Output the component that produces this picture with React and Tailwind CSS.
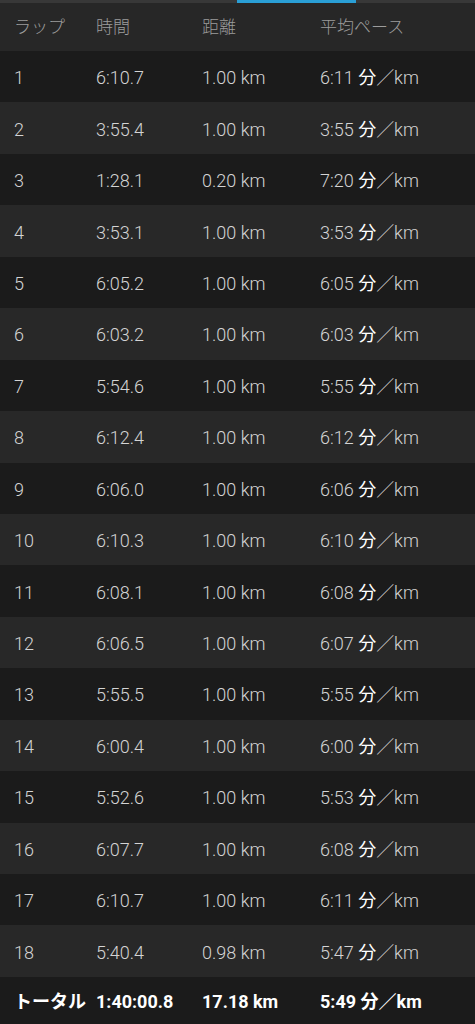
const laps = [
  ['1', '6:10.7', '1.00 km', '6:11'],
  ['2', '3:55.4', '1.00 km', '3:55'],
  ['3', '1:28.1', '0.20 km', '7:20'],
  ['4', '3:53.1', '1.00 km', '3:53'],
  ['5', '6:05.2', '1.00 km', '6:05'],
  ['6', '6:03.2', '1.00 km', '6:03'],
  ['7', '5:54.6', '1.00 km', '5:55'],
  ['8', '6:12.4', '1.00 km', '6:12'],
  ['9', '6:06.0', '1.00 km', '6:06'],
  ['10', '6:10.3', '1.00 km', '6:10'],
  ['11', '6:08.1', '1.00 km', '6:08'],
  ['12', '6:06.5', '1.00 km', '6:07'],
  ['13', '5:55.5', '1.00 km', '5:55'],
  ['14', '6:00.4', '1.00 km', '6:00'],
  ['15', '5:52.6', '1.00 km', '5:53'],
  ['16', '6:07.7', '1.00 km', '6:08'],
  ['17', '6:10.7', '1.00 km', '6:11'],
  ['18', '5:40.4', '0.98 km', '5:47'],
];

const cols = 'grid grid-cols-[82px_106px_118px_1fr] items-center pl-[14px]';

function Pace({ value }) {
  return (
    <span>
      {value} <span className="text-white font-normal">分</span>／km
    </span>
  );
}

export default function App() {
  return (
    <div
      className="w-[475px] h-[1024px] overflow-hidden bg-[#1b1b1b] text-[18px]"
      style={{ fontFamily: 'Roboto, "Noto Sans CJK JP", sans-serif' }}
    >
      {/* tab indicator */}
      <div className="h-[3px] bg-[#383838] flex">
        <div className="ml-[237px] w-[119px] bg-[#2a9fd6]" />
      </div>

      {/* header */}
      <div className={`${cols} h-[48px] bg-[#272727] text-[#9c9c9c] text-[17px] font-light pt-[2px]`}>
        <span>ラップ</span>
        <span>時間</span>
        <span>距離</span>
        <span>平均ペース</span>
      </div>

      {/* laps */}
      {laps.map((lap, i) => (
        <div
          key={lap[0]}
          className={`${cols} h-[51.44px] pt-[2px] text-[#d4d4d4] font-light ${i % 2 === 0 ? 'bg-[#1b1b1b]' : 'bg-[#282828]'}`}
        >
          <span>{lap[0]}</span>
          <span>{lap[1]}</span>
          <span>{lap[2]}</span>
          <Pace value={lap[3]} />
        </div>
      ))}

      {/* total */}
      <div className={`${cols} h-[47px] pt-[2px] bg-[#1b1b1b] text-white font-bold`}>
        <span>トータル</span>
        <span>1:40:00.8</span>
        <span>17.18 km</span>
        <span>5:49 分／km</span>
      </div>
    </div>
  );
}
